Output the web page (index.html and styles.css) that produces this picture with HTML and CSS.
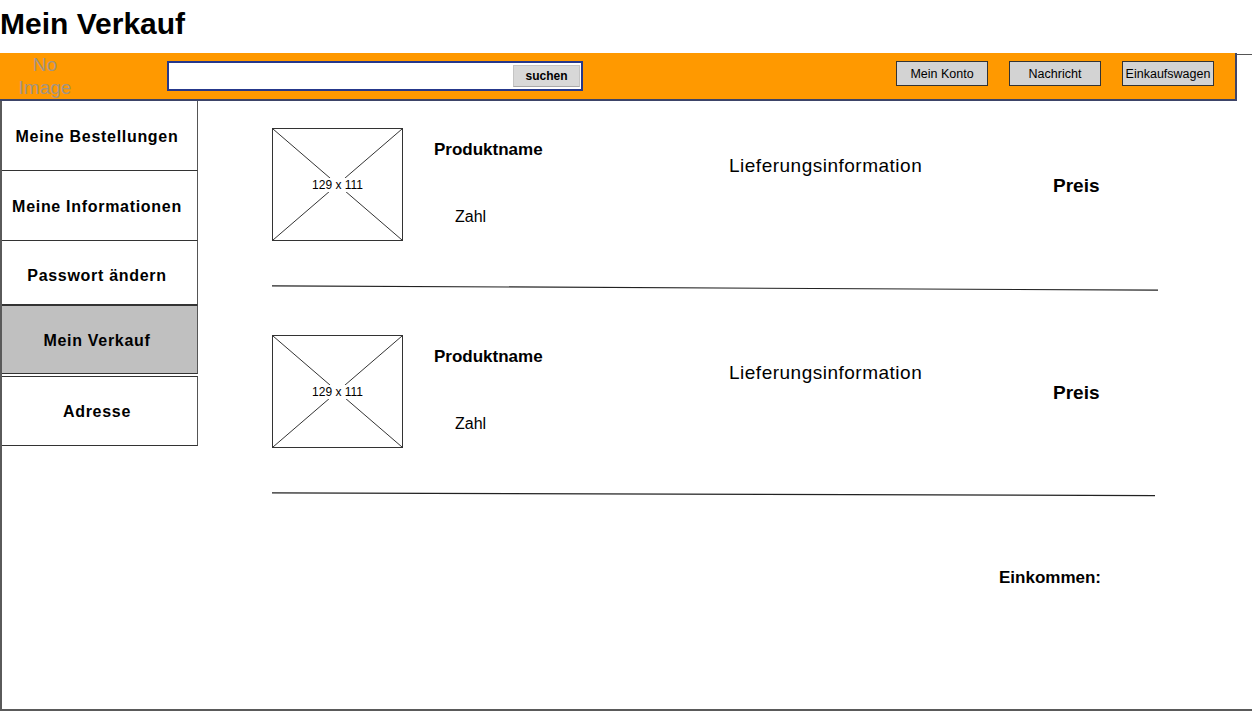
FILE: index.html
```html
<!DOCTYPE html>
<html lang="de">
<head>
<meta charset="utf-8">
<title>Mein Verkauf</title>
<link rel="stylesheet" href="styles.css">
</head>
<body>
<h1 class="title">Mein Verkauf</h1>
<div class="topbar">
  <div class="bar">
    <div class="logo">No<br>Image</div>
    <div class="search">
      <span class="search-btn">suchen</span>
    </div>
    <div class="nav">
      <span class="nav-btn">Mein Konto</span>
      <span class="nav-btn">Nachricht</span>
      <span class="nav-btn">Einkaufswagen</span>
    </div>
  </div>
  <div class="bar-tail"></div>
</div>
<div class="main">
  <div class="sidebar">
    <div class="side-item h70">Meine Bestellungen</div>
    <div class="side-item h70">Meine Informationen</div>
    <div class="side-item h64 low">Passwort ändern</div>
    <div class="side-item h69 active">Mein Verkauf</div>
    <div class="side-item h70 boxed">Adresse</div>
  </div>
  <div class="content">
    <div class="product">
      <div class="thumb">
        <svg class="thumb-x" width="129" height="111" viewBox="0 0 129 111"><line x1="0" y1="0" x2="129" y2="111"/><line x1="129" y1="0" x2="0" y2="111"/></svg>
        <span class="thumb-label">129 x 111</span>
      </div>
      <div class="name-col">
        <div class="pname">Produktname</div>
        <div class="qty">Zahl</div>
      </div>
      <div class="info-col">Lieferungsinformation</div>
      <div class="price-col">Preis</div>
    </div>
    <svg class="divider" width="886" height="6" viewBox="0 0 886 6"><line x1="0" y1="0.8" x2="886" y2="5.2"/></svg>
    <div class="product">
      <div class="thumb">
        <svg class="thumb-x" width="129" height="111" viewBox="0 0 129 111"><line x1="0" y1="0" x2="129" y2="111"/><line x1="129" y1="0" x2="0" y2="111"/></svg>
        <span class="thumb-label">129 x 111</span>
      </div>
      <div class="name-col">
        <div class="pname">Produktname</div>
        <div class="qty">Zahl</div>
      </div>
      <div class="info-col">Lieferungsinformation</div>
      <div class="price-col">Preis</div>
    </div>
    <svg class="divider" width="886" height="6" viewBox="0 0 886 6"><line x1="0" y1="0.8" x2="883" y2="3.6"/></svg>
    <div class="income">Einkommen:</div>
  </div>
</div>
</body>
</html>
```
FILE: styles.css
```css
html, body {
  margin: 0;
  padding: 0;
  background: #ffffff;
}
body {
  width: 1252px;
  font-family: "Liberation Sans", Arial, sans-serif;
  color: #000;
}
.title {
  margin: 0;
  height: 53px;
  box-sizing: border-box;
  padding-top: 4px;
  font-size: 30px;
  line-height: 40px;
  font-weight: bold;
}
.topbar {
  display: flex;
  height: 48px;
}
.bar {
  width: 1237px;
  height: 48px;
  box-sizing: border-box;
  background: #ff9900;
  border-bottom: 2px solid #3d4468;
  border-right: 2px solid #3d4468;
  display: flex;
  align-items: flex-start;
}
.bar-tail {
  flex: 1;
  border-top: 1px solid #555;
  margin-top: 1px;
}
.logo {
  width: 90px;
  height: 46px;
  text-align: center;
  font-size: 19px;
  line-height: 23px;
  box-sizing: border-box;
  color: #a39483;
}
.search {
  margin-left: 77px;
  margin-top: 8px;
  width: 416px;
  height: 30px;
  box-sizing: border-box;
  border: 2px solid #25388c;
  background: #fff;
  display: flex;
  justify-content: flex-end;
  align-items: center;
  padding-right: 1px;
}
.search-btn {
  width: 67px;
  height: 22px;
  box-sizing: border-box;
  background: #d8d8d8;
  border: 1px solid #c4c4c4;
  border-bottom-color: #a8a8a8;
  font-size: 12px;
  font-weight: bold;
  line-height: 20px;
  text-align: center;
}
.nav {
  margin-left: auto;
  margin-right: 21px;
  margin-top: 8px;
  display: flex;
  gap: 21px;
}
.nav-btn {
  width: 92px;
  height: 25px;
  box-sizing: border-box;
  background: #d3d3d3;
  border: 1px solid #333;
  font-size: 12.5px;
  line-height: 25px;
  text-align: center;
  letter-spacing: 0;
}
.main {
  display: flex;
  height: 610px;
  box-sizing: border-box;
  border-left: 2px solid #5a5a5a;
  border-bottom: 2px solid #5a5a5a;
}
.sidebar {
  width: 196px;
  display: flex;
  flex-direction: column;
}
.side-item {
  box-sizing: border-box;
  border-right: 1px solid #555;
  border-bottom: 1px solid #333;
  display: flex;
  align-items: center;
  justify-content: center;
  padding-right: 5px;
  padding-top: 2px;
  font-size: 16px;
  font-weight: bold;
  letter-spacing: 0.7px;
}
.h70 { height: 70px; }
.h64 { height: 64px; }
.h69 { height: 69px; }
.low { padding-top: 6px; }
.active {
  background: #c0c0c0;
  border-top: 1px solid #333;
}
.boxed {
  margin-top: 2px;
  border-top: 1px solid #333;
}
.content {
  flex: 1;
  padding-left: 74px;
  padding-top: 27px;
}
.product {
  display: flex;
  align-items: flex-start;
  height: 113px;
}
.thumb {
  position: relative;
  width: 131px;
  height: 113px;
  box-sizing: border-box;
  border: 1px solid #333;
  display: flex;
  align-items: center;
  justify-content: center;
}
.thumb-x {
  position: absolute;
  left: 0;
  top: 0;
}
.thumb-x line {
  stroke: #333;
  stroke-width: 1;
}
.thumb-label {
  position: relative;
  background: #fff;
  font-size: 12px;
  line-height: 14px;
  padding: 0 2px;
}
.name-col {
  margin-left: 31px;
  width: 295px;
  padding-top: 12px;
}
.pname {
  font-size: 17px;
  font-weight: bold;
  line-height: 20px;
}
.qty {
  margin-top: 47px;
  margin-left: 21px;
  font-size: 16px;
  line-height: 20px;
}
.info-col {
  width: 324px;
  padding-top: 27px;
  font-size: 19px;
  line-height: 22px;
  letter-spacing: 0.5px;
}
.price-col {
  padding-top: 47px;
  font-size: 19px;
  font-weight: bold;
  line-height: 22px;
}
.divider {
  display: block;
  margin-top: 44px;
  margin-bottom: 44px;
}
.divider line {
  stroke: #222;
  stroke-width: 1.2;
}
.income {
  margin-top: 70px;
  margin-left: 727px;
  font-size: 17px;
  font-weight: bold;
  line-height: 20px;
}
```
